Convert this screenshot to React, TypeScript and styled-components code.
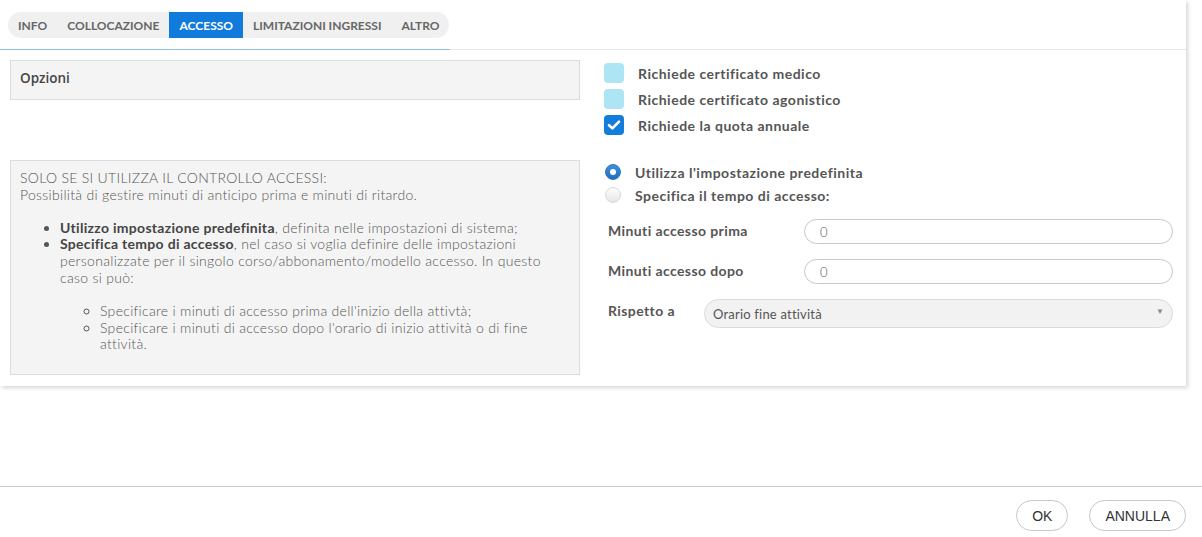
import React from "react";
import styled, { createGlobalStyle } from "styled-components";

const GlobalStyle = createGlobalStyle`
	html, body {
		margin: 0;
		padding: 0;
		background: #fff;
		font-family: "Lato", "Open Sans", sans-serif;
		color: #555;
	}
`;

const Page = styled.div`
	width: 1202px;
	height: 537px;
	display: flex;
	flex-direction: column;
	position: relative;
`;

const Panel = styled.div`
	width: 1186px;
	height: 386px;
	background: #fff;
	box-shadow: 2px 2px 4px rgba(0, 0, 0, 0.16);
	display: flex;
	flex-direction: column;
`;

const TabHeader = styled.div`
	display: flex;
	height: 50px;
`;

const TabStripWrap = styled.div`
	width: 442px;
	flex-shrink: 0;
	padding: 12px 0 0 8px;
	border-bottom: 1px solid #8fc1ea;
`;

const TabFiller = styled.div`
	flex: 1;
	border-bottom: 1px solid #e6e6e6;
`;

const TabStrip = styled.div`
	display: inline-flex;
	height: 26px;
	background: #f0f0f0;
	border-radius: 13px;
	overflow: hidden;
`;

const Tab = styled.div<{ $active?: boolean }>`
	display: flex;
	align-items: center;
	flex-shrink: 0;
	white-space: nowrap;
	padding: 0 10px;
	font-size: 12px;
	font-weight: 700;
	color: ${(p) => (p.$active ? "#fff" : "#666")};
	background: ${(p) => (p.$active ? "#117bdc" : "transparent")};
`;

const Content = styled.div`
	display: grid;
	grid-template-columns: 570px 1fr;
	column-gap: 23px;
	padding: 10px 13px 0 10px;
`;

const GreyBox = styled.div`
	background: #f4f4f4;
	border: 1px solid #dcdcdc;
	box-sizing: border-box;
`;

const OptionsBox = styled(GreyBox)`
	height: 40px;
	padding: 8px 9px;
	font-family: "Open Sans", sans-serif;
	font-size: 13.5px;
	font-weight: 600;
	color: #444;
`;

const InfoBox = styled(GreyBox)`
	margin-top: 25px;
	height: 215px;
	padding: 9px 9px;
	font-size: 14px;
	font-weight: 300;
	line-height: 16.8px;
	letter-spacing: 0.3px;
	color: #555;

	p {
		margin: 0;
	}
	ul {
		margin: 16px 0 0;
		padding-left: 40px;
	}
	ul ul {
		list-style: circle;
		margin: 16px 0 16px;
	}
	b {
		font-weight: 700;
		color: #444;
	}
`;

const CheckGroup = styled.div`
	display: flex;
	flex-direction: column;
	gap: 6px;
	padding-top: 3px;
	padding-left: 1px;
`;

const CheckRow = styled.label`
	display: flex;
	align-items: center;
	gap: 14px;
	font-size: 14px;
	font-weight: 700;
	letter-spacing: 0.5px;
	color: #555;
	height: 20px;
`;

const CheckBox = styled.span<{ $checked?: boolean }>`
	width: 20px;
	height: 20px;
	border-radius: 4px;
	background: ${(p) => (p.$checked ? "#137ddc" : "#ade5f4")};
	display: flex;
	align-items: center;
	justify-content: center;
`;

const RightCol = styled.div`
	margin-top: 25px;
	display: flex;
	flex-direction: column;
`;

const RadioGroup = styled.div`
	display: flex;
	flex-direction: column;
	gap: 7px;
	padding-left: 2px;
	padding-top: 4px;
`;

const RadioRow = styled.label`
	display: flex;
	align-items: center;
	gap: 14px;
	font-size: 14px;
	font-weight: 700;
	letter-spacing: 0.5px;
	color: #555;
	height: 16px;
`;

const Radio = styled.span<{ $checked?: boolean }>`
	width: 16px;
	height: 16px;
	border-radius: 50%;
	box-sizing: border-box;
	display: flex;
	align-items: center;
	justify-content: center;
	background: ${(p) =>
		p.$checked
			? "linear-gradient(#3f8fd8, #1f6fbf)"
			: "linear-gradient(#fdfdfd, #e6e6e6)"};
	border: 1px solid ${(p) => (p.$checked ? "#2a78c6" : "#d8d8d8")};

	&::after {
		content: "";
		display: ${(p) => (p.$checked ? "block" : "none")};
		width: 6px;
		height: 6px;
		border-radius: 50%;
		background: #fff;
	}
`;

const FormRows = styled.div`
	display: flex;
	flex-direction: column;
	gap: 15px;
	margin-top: 16px;
	padding-left: 5px;
`;

const FormRow = styled.div`
	display: flex;
	align-items: flex-start;
`;

const FieldLabel = styled.div<{ $width: number }>`
	width: ${(p) => p.$width}px;
	font-size: 14px;
	font-weight: 700;
	letter-spacing: 0.4px;
	color: #555;
	padding-top: 3px;
	flex-shrink: 0;
`;

const TextInput = styled.div`
	flex: 1;
	height: 25px;
	box-sizing: border-box;
	border: 1px solid #c8c8c8;
	border-radius: 13px;
	padding: 0 15px;
	display: flex;
	align-items: center;
	font-size: 13px;
	font-weight: 300;
	color: #555;
`;

const Select = styled.div`
	flex: 1;
	height: 29px;
	box-sizing: border-box;
	border: 1px solid #dadada;
	border-radius: 15px;
	background: #f2f2f2;
	padding: 0 8px;
	display: flex;
	align-items: center;
	justify-content: space-between;
	font-size: 13px;
	font-weight: 400;
	letter-spacing: 0.2px;
	color: #555;
`;

const Caret = styled.span`
	font-size: 8px;
	color: #888;
	margin-top: -6px;
`;

const Footer = styled.div`
	margin-top: 100px;
	border-top: 1px solid #c8c8c8;
	display: flex;
	justify-content: flex-end;
	gap: 21px;
	padding: 13px 16px 0 0;
`;

const Button = styled.button`
	height: 31px;
	padding: 0 15px;
	border: 1px solid #c8c8c8;
	border-radius: 16px;
	background: #fff;
	font-family: "Liberation Sans", Arial, sans-serif;
	font-size: 14px;
	color: #333;
`;

const tabs = ["INFO", "COLLOCAZIONE", "ACCESSO", "LIMITAZIONI INGRESSI", "ALTRO"];

const checks = [
	{ label: "Richiede certificato medico", checked: false },
	{ label: "Richiede certificato agonistico", checked: false },
	{ label: "Richiede la quota annuale", checked: true },
];

export default function App() {
	return (
		<Page>
			<GlobalStyle />
			<Panel>
				<TabHeader>
					<TabStripWrap>
						<TabStrip>
							{tabs.map((t) => (
								<Tab key={t} $active={t === "ACCESSO"}>
									{t}
								</Tab>
							))}
						</TabStrip>
					</TabStripWrap>
					<TabFiller />
				</TabHeader>
				<Content>
					<OptionsBox>Opzioni</OptionsBox>
					<CheckGroup>
						{checks.map((c) => (
							<CheckRow key={c.label}>
								<CheckBox $checked={c.checked}>
									{c.checked && (
										<svg width="14" height="12" viewBox="0 0 14 12">
											<path
												d="M2 6.2 L5.4 9.4 L12 2.6"
												fill="none"
												stroke="#fff"
												strokeWidth="2.6"
												strokeLinecap="round"
												strokeLinejoin="round"
											/>
										</svg>
									)}
								</CheckBox>
								{c.label}
							</CheckRow>
						))}
					</CheckGroup>
					<InfoBox>
						<p>SOLO SE SI UTILIZZA IL CONTROLLO ACCESSI:</p>
						<p>Possibilità di gestire minuti di anticipo prima e minuti di ritardo.</p>
						<ul>
							<li>
								<b>Utilizzo impostazione predefinita</b>, definita nelle impostazioni di sistema;
							</li>
							<li>
								<b>Specifica tempo di accesso</b>, nel caso si voglia definire delle impostazioni
								personalizzate per il singolo corso/abbonamento/modello accesso. In questo caso si
								può:
								<ul>
									<li>Specificare i minuti di accesso prima dell'inizio della attivtà;</li>
									<li>
										Specificare i minuti di accesso dopo l'orario di inizio attività o di fine
										attività.
									</li>
								</ul>
							</li>
						</ul>
					</InfoBox>
					<RightCol>
						<RadioGroup>
							<RadioRow>
								<Radio $checked />
								Utilizza l'impostazione predefinita
							</RadioRow>
							<RadioRow>
								<Radio />
								Specifica il tempo di accesso:
							</RadioRow>
						</RadioGroup>
						<FormRows>
							<FormRow>
								<FieldLabel $width={196}>Minuti accesso prima</FieldLabel>
								<TextInput>0</TextInput>
							</FormRow>
							<FormRow>
								<FieldLabel $width={196}>Minuti accesso dopo</FieldLabel>
								<TextInput>0</TextInput>
							</FormRow>
							<FormRow>
								<FieldLabel $width={96}>Rispetto a</FieldLabel>
								<Select>
									Orario fine attività
									<Caret>▼</Caret>
								</Select>
							</FormRow>
						</FormRows>
					</RightCol>
				</Content>
			</Panel>
			<Footer>
				<Button>OK</Button>
				<Button>ANNULLA</Button>
			</Footer>
		</Page>
	);
}
